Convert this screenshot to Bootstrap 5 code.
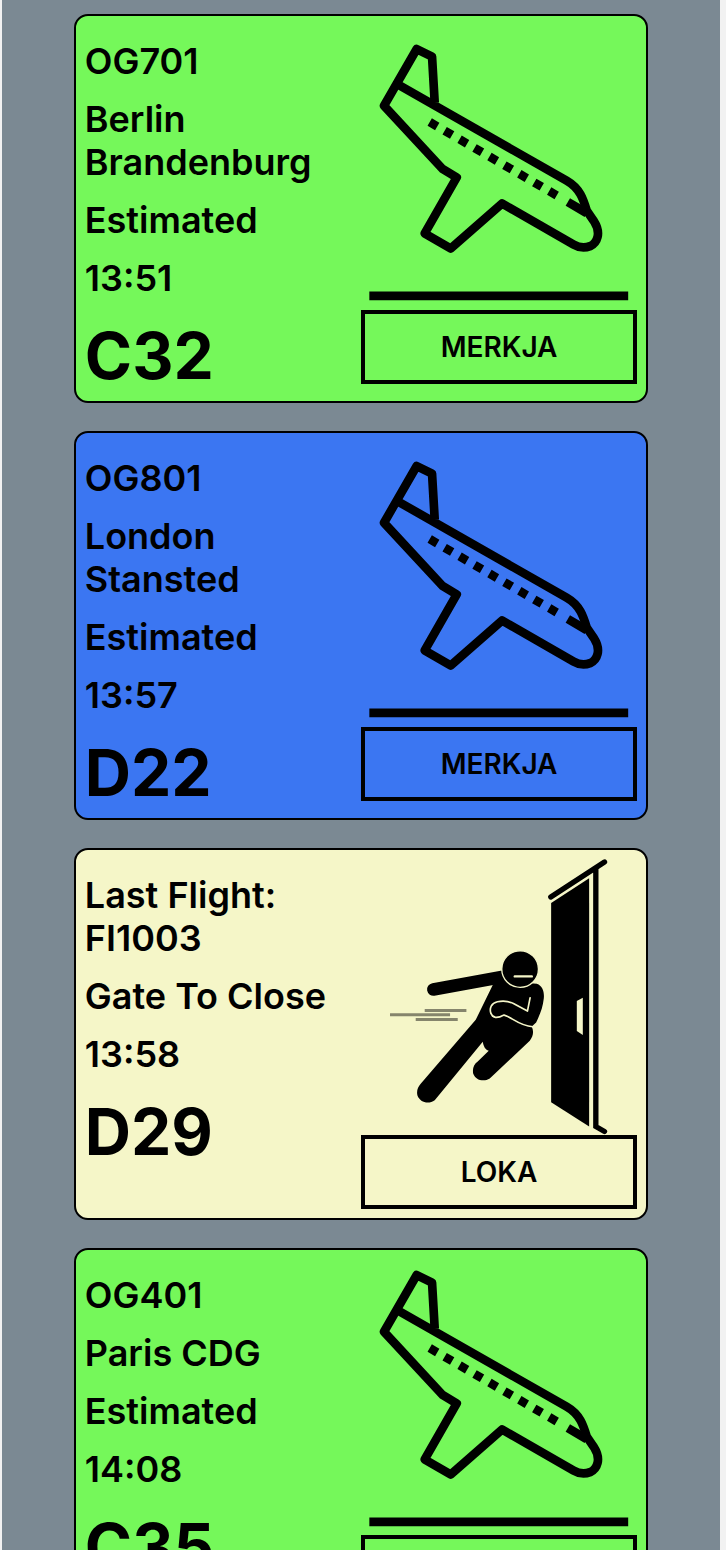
<!DOCTYPE html>
<html lang="is">
<head>
<meta charset="utf-8">
<meta name="viewport" content="width=device-width, initial-scale=1">
<title>Flights</title>
<link href="https://cdn.jsdelivr.net/npm/bootstrap@5.3.0/dist/css/bootstrap.min.css" rel="stylesheet">
<style>
  body { background: #f2f2f2; font-family: Inter, "Liberation Sans", sans-serif; }
  .board { background: #7b8993; margin: 0 6px 0 2px; padding: 14px 0 28px; gap: 28px; scrollbar-width: none; }
  .board::-webkit-scrollbar { display: none; }
  .flight { width: 80%; flex-shrink: 0; padding: 9px; border: 2px solid #000; border-radius: 14px; color: #000; }
  .flight-green { background: #75f85a; }
  .flight-blue { background: #3b76f2; }
  .flight-cream { background: #f5f6c8; }
  .info { padding-top: 15px; }
  .info p { font-size: 36px; line-height: 43px; font-weight: 600; margin-bottom: 15px; }
  .info .gate { font-size: 64px; line-height: 73px; font-weight: 700; margin: 19px 0 0; }
  .action { height: 74px; border: 4px solid #000; border-radius: 0; color: #000; font-size: 28px; font-weight: 600; }
</style>
</head>
<body>
<svg class="d-none" aria-hidden="true">
  <symbol id="plane" viewBox="3 42 828 828">
    <g fill="none" stroke="#000" stroke-width="26">
      <path stroke-linejoin="round" d="M115 197L620 485C660 508 670 542 680 575L702 607C724 642 711 672 690 681C672 688 655 685 640 676L426 553L272 688L194 643L290 475L248 450L72 260L170 90L216 113L224 250"/>
      <path d="M209 309L590 529" stroke-dasharray="26 25.7"/>
      <path d="M623 549L680 582"/>
    </g>
    <path d="M28 817H804V843H28z"/>
  </symbol>
  <symbol id="door" viewBox="-57 30 828 828">
    <path d="M513 162L627 88V832L513 759z"/>
    <path d="M590 456L608 446V558L590 546z" fill="#f5f6c8"/>
    <path d="M512 144L673 39M647 58V832L673 847" fill="none" stroke="#000" stroke-width="16" stroke-linecap="round"/>
    <g fill="none" stroke="#85856c" stroke-width="9"><path d="M134 484H259M30 497H210M107 511H233"/></g>
    <path d="M160 421L365 384" stroke="#000" stroke-width="38" stroke-linecap="round"/>
    <path d="M338 408L370 375L440 402L470 404C488 410 493 430 491 448C488 475 480 495 468 520L455 532C462 548 459 562 449 575L329 688C310 700 285 692 279 672C277 655 282 645 293 637L326 605C315 602 310 590 308 578L164 753C145 767 119 759 112 738C109 724 114 714 122 704L287 512Z"/>
    <circle cx="420" cy="360" r="55" stroke="#f5f6c8" stroke-width="4"/>
    <g fill="none" stroke="#f5f6c8" stroke-width="5" stroke-linecap="round" stroke-linejoin="round">
      <path d="M404 382H455" stroke-width="7"/>
      <path d="M450 446L442 486L400 463C385 456 370 454 352 458C333 462 328 478 332 492C338 507 350 509 372 498C392 502 416 530 458 533"/>
    </g>
  </symbol>
</svg>

<main class="board vh-100 overflow-auto d-flex flex-column align-items-center">
  <article class="flight flight-green row g-0">
    <div class="info col-6">
      <p>OG701</p>
      <p>Berlin Brandenburg</p>
      <p>Estimated</p>
      <p>13:51</p>
      <p class="gate">C32</p>
    </div>
    <div class="col-6 d-flex flex-column justify-content-center">
      <svg class="w-100" viewBox="0 0 276 276" role="img" aria-label="Landing"><use href="#plane"/></svg>
      <button type="button" class="btn action w-100">MERKJA</button>
    </div>
  </article>

  <article class="flight flight-blue row g-0">
    <div class="info col-6">
      <p>OG801</p>
      <p>London Stansted</p>
      <p>Estimated</p>
      <p>13:57</p>
      <p class="gate">D22</p>
    </div>
    <div class="col-6 d-flex flex-column justify-content-center">
      <svg class="w-100" viewBox="0 0 276 276" role="img" aria-label="Landing"><use href="#plane"/></svg>
      <button type="button" class="btn action w-100">MERKJA</button>
    </div>
  </article>

  <article class="flight flight-cream row g-0">
    <div class="info col-6">
      <p>Last Flight: FI1003</p>
      <p>Gate To Close</p>
      <p>13:58</p>
      <p class="gate">D29</p>
    </div>
    <div class="col-6 d-flex flex-column justify-content-center">
      <svg class="w-100" viewBox="0 0 276 276" role="img" aria-label="Gate closing"><use href="#door"/></svg>
      <button type="button" class="btn action w-100">LOKA</button>
    </div>
  </article>

  <article class="flight flight-green row g-0">
    <div class="info col-6">
      <p>OG401</p>
      <p>Paris CDG</p>
      <p>Estimated</p>
      <p>14:08</p>
      <p class="gate">C35</p>
    </div>
    <div class="col-6 d-flex flex-column justify-content-center">
      <svg class="w-100" viewBox="0 0 276 276" role="img" aria-label="Landing"><use href="#plane"/></svg>
      <button type="button" class="btn action w-100">MERKJA</button>
    </div>
  </article>
</main>
<script src="https://cdn.jsdelivr.net/npm/bootstrap@5.3.0/dist/js/bootstrap.bundle.min.js"></script>
</body>
</html>
